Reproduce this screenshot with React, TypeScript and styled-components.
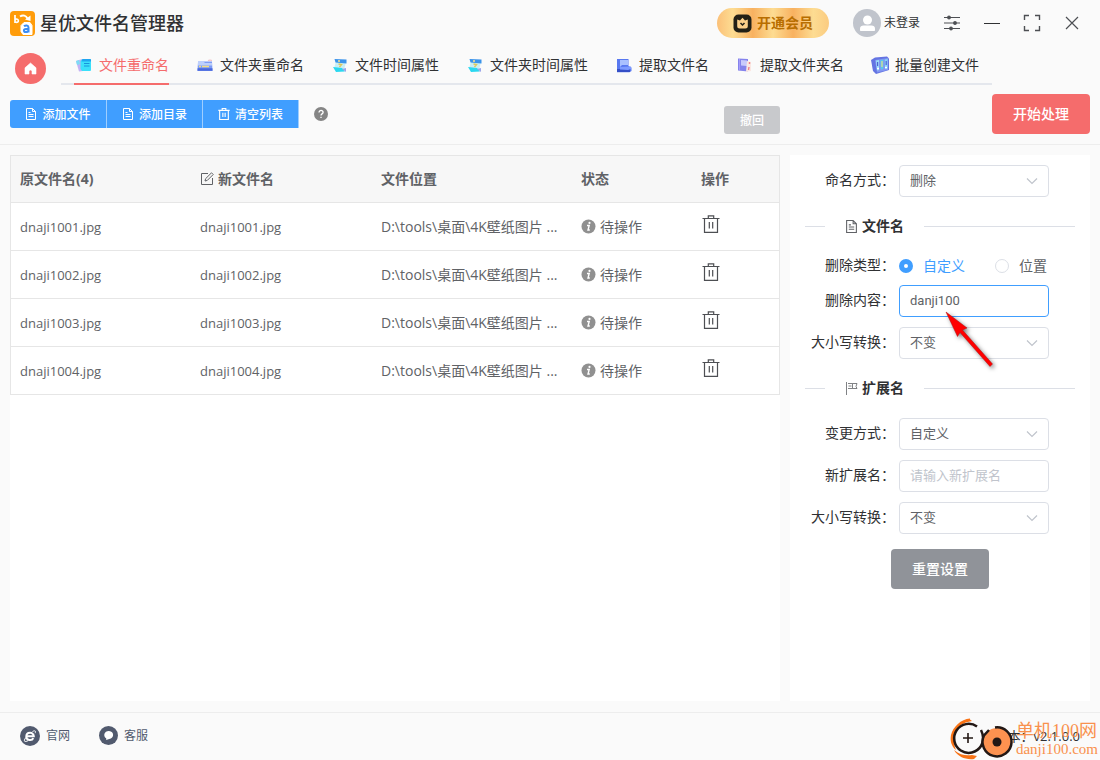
import React, { ReactNode } from "react";
import styled, { createGlobalStyle, css } from "styled-components";

const GlobalStyle = createGlobalStyle`
  *, *::before, *::after { box-sizing: border-box; }
  body {
    margin: 0;
    background: #fafafa;
    color: #303133;
    font-family: "Open Sans", "Noto Sans CJK SC", sans-serif;
    font-size: 14px;
    line-height: 20px;
  }
  button, input, select { font-family: inherit; margin: 0; }
  svg { display: block; flex: none; }
`;

/* ---------- layout ---------- */

const Window = styled.div`
  display: flex;
  flex-direction: column;
  min-height: 100vh;
`;

const TitleBar = styled.header`
  display: flex;
  align-items: center;
  height: 46px;
  padding: 0 18px 0 10px;
`;

const AppTitle = styled.h1`
  flex: 1;
  margin: 0 0 0 5px;
  font-size: 18px;
  line-height: 24px;
  font-weight: 500;
`;

const VipButton = styled.button`
  display: flex;
  align-items: center;
  justify-content: center;
  gap: 5px;
  width: 112px;
  height: 30px;
  padding: 0;
  border: 0;
  border-radius: 15px;
  background: linear-gradient(90deg, #fbc078 0%, #fddc92 14%, #f8b160 32%, #fddc92 50%, #f8b160 68%, #fddc92 86%, #fbcb80 100%);
  color: #b86e00;
  font-size: 14px;
  font-weight: 700;
  line-height: 20px;
`;

const UserButton = styled.button`
  display: flex;
  align-items: center;
  gap: 3px;
  margin: 0 22px 0 24px;
  padding: 0;
  border: 0;
  background: none;
  color: #303133;
  font-size: 12px;
  line-height: 16px;
`;

const WindowControls = styled.div`
  display: flex;
  gap: 20px;
`;

const IconButton = styled.button`
  display: flex;
  align-items: center;
  justify-content: center;
  width: 20px;
  height: 20px;
  padding: 0;
  border: 0;
  background: none;
  color: #4d4f53;
`;

const NavRow = styled.nav`
  display: flex;
  align-items: center;
  height: 39px;
  padding-left: 15px;
`;

const HomeButton = styled.button`
  display: flex;
  align-items: center;
  justify-content: center;
  width: 31px;
  height: 31px;
  margin: 6px 15px 0 0;
  padding: 0;
  border: 0;
  border-radius: 50%;
  background: #f56c6c;
`;

const TabList = styled.ul`
  display: flex;
  gap: 26px;
  height: 39px;
  margin: 0;
  padding: 0 13px;
  list-style: none;
  box-shadow: inset 0 -2px #e4e7ed;
`;

const Tab = styled.a<{ $active?: boolean }>`
  display: flex;
  align-items: center;
  gap: 5px;
  height: 39px;
  border-bottom: 2px solid ${(p) => (p.$active ? "#f56c6c" : "transparent")};
  color: ${(p) => (p.$active ? "#f56c6c" : "#303133")};
  text-decoration: none;
  white-space: nowrap;
`;

const Toolbar = styled.div`
  display: flex;
  align-items: center;
  height: 60px;
  padding: 0 10px 2px;
  border-bottom: 1px solid #ededed;
`;

const ButtonGroup = styled.div`
  display: flex;
  overflow: hidden;
  border-radius: 3px 0 0 3px;
`;

const buttonReset = css`
  display: flex;
  align-items: center;
  justify-content: center;
  padding: 0;
  border: 0;
  color: #fff;
  white-space: nowrap;
`;

const GroupButton = styled.button`
  ${buttonReset}
  gap: 5px;
  width: 96px;
  height: 28px;
  border-right: 1px solid #9fceff;
  background: #409eff;
  font-size: 12px;
  font-weight: 500;

  &:first-child { width: 97px; }
`;

const HelpButton = styled(IconButton)`
  margin-left: 12px;
`;

const UndoButton = styled.button`
  ${buttonReset}
  width: 56px;
  height: 28px;
  margin: 12px 212px 0 auto;
  border-radius: 3px;
  background: #c8c9cc;
  font-size: 12px;
  font-weight: 500;
`;

const LargeButton = styled.button<{ $tone: "danger" | "info" }>`
  ${buttonReset}
  width: 98px;
  height: 40px;
  padding-bottom: 2px;
  border-radius: 4px;
  background: ${(p) => (p.$tone === "danger" ? "#f56c6c" : "#909399")};
  font-size: 14px;
  font-weight: 500;
`;

const Content = styled.main`
  display: flex;
  flex: 1;
  gap: 10px;
  padding: 10px 10px 11px;
`;

const FilePanel = styled.section`
  flex: 1;
  min-width: 0;
  background: #fff;
`;

const FileTable = styled.table`
  width: 100%;
  table-layout: fixed;
  border: 1px solid #e6e6e6;
  border-bottom: 0;
  border-spacing: 0;
  color: #606266;
`;

const Column = styled.col<{ $width?: number }>`
  width: ${(p) => (p.$width ? `${p.$width}px` : "auto")};
`;

const cell = css`
  height: 48px;
  padding: 0 9px;
  border-bottom: 1px solid #e6e6e6;
  text-align: left;
  white-space: nowrap;
`;

const HeadCell = styled.th`
  ${cell}
  height: 47px;
  background: #f7f7f7;
  font-weight: 700;
`;

const Cell = styled.td<{ $latin?: boolean; $action?: boolean }>`
  ${cell}
  padding-bottom: ${(p) => (p.$action ? 5 : 0)}px;
  font-size: ${(p) => (p.$latin ? 13 : 14)}px;
`;

const Inline = styled.span`
  display: flex;
  align-items: center;
  gap: 4px;
`;

/* ---------- settings form ---------- */

const SettingsPanel = styled.form`
  display: flex;
  flex: none;
  flex-direction: column;
  width: 300px;
  padding: 10px 15px;
  background: #fff;
`;

const FormRow = styled.div<{ $compact?: boolean }>`
  position: relative;
  display: flex;
  align-items: center;
  gap: 4px;
  height: ${(p) => (p.$compact ? 19 : 32)}px;
  margin-bottom: 10px;
`;

const Label = styled.label`
  width: 90px;
  padding-bottom: 2px;
  text-align: right;
  white-space: nowrap;
`;

const Field = styled.div`
  position: relative;
  width: 150px;
`;

const control = css`
  display: block;
  width: 100%;
  height: 32px;
  padding: 0 10px 2px;
  border: 1px solid #dcdfe6;
  border-radius: 4px;
  outline: 0;
  background: #fff;
  color: #606266;
  font-size: 13px;
`;

const Select = styled.select`
  ${control}
  appearance: none;
`;

const TextInput = styled.input<{ $focused?: boolean }>`
  ${control}
  font-family: Roboto, "Noto Sans CJK SC", sans-serif;
  border-color: ${(p) => (p.$focused ? "#409eff" : "#dcdfe6")};
  &::placeholder { color: #c0c4cc; opacity: 1; }
`;

const Chevron = styled.svg`
  position: absolute;
  top: 10px;
  right: 11px;
  pointer-events: none;
`;

const SectionTitle = styled.h2`
  display: flex;
  align-items: center;
  gap: 4px;
  height: 20px;
  margin: 9px 0 20px;
  font-size: 14px;
  font-weight: 700;
  line-height: 20px;

  svg { color: #606266; }
  &::before, &::after {
    content: "";
    height: 1px;
    background: #dcdfe6;
  }
  &::before { width: 20px; margin-right: 16px; }
  &::after { flex: 1; margin-left: 16px; }
`;

const RadioLabel = styled.label<{ $checked?: boolean }>`
  display: flex;
  align-items: center;
  gap: 10px;
  margin-right: 26px;
  color: ${(p) => (p.$checked ? "#409eff" : "#606266")};
`;

const Radio = styled.input`
  appearance: none;
  width: 14px;
  height: 14px;
  border: 1px solid #dcdfe6;
  border-radius: 50%;
  background: #fff;
  &:checked { border: 5px solid #409eff; }
`;

const Pointer = styled.svg`
  position: absolute;
  top: 24px;
  left: 136px;
  z-index: 1;
  pointer-events: none;
  filter: drop-shadow(2px 2px 2px rgba(0, 0, 0, 0.5));
`;

const ResetRow = styled.div`
  display: flex;
  justify-content: center;
  margin-top: 5px;
`;

/* ---------- footer ---------- */

const Footer = styled.footer`
  position: relative;
  display: flex;
  align-items: center;
  gap: 29px;
  height: 48px;
  padding: 0 20px 2px;
  border-top: 1px solid #ededed;
`;

const FooterLink = styled.a`
  display: flex;
  align-items: center;
  gap: 6px;
  color: #515a6e;
  font-size: 12px;
  line-height: 16px;
  text-decoration: none;
`;

const Version = styled.span`
  margin-left: auto;
  font-size: 13px;
`;

const Watermark = styled.div`
  position: absolute;
  top: 5px;
  right: 2px;
  display: flex;
  align-items: center;
  gap: 2px;
`;

const WatermarkText = styled.div`
  color: #f9914d;
  font-family: "Liberation Serif", "Noto Sans CJK SC", serif;
  font-size: 15px;
  line-height: 16px;
`;

const WatermarkName = styled.div`
  font-size: 18px;
  line-height: 20px;
  white-space: nowrap;
`;

/* ---------- icons ---------- */

const LogoIcon = () => (
  <svg width="25" height="25" viewBox="0 0 25 25">
    <rect width="25" height="25" rx="4" fill="#ff9c0a" />
    <path d="M5 4v8M5 9.200a1.700 1.700 0 1 1 0 1" stroke="#fff" strokeWidth="1.700" fill="none" />
    <path d="M10 5.500c3-2 6-1 7.500 2" stroke="#fff" strokeWidth="2" fill="none" />
    <path d="M20.500 4.500V10l-5.500-1.500z" fill="#fff" />
    <path d="M14 11.500h6l2 3v9h-9l-2-3v-6z" fill="#fff" stroke="#fff" strokeLinejoin="round" />
    <path d="M14 15.300c1.500-1.300 4.500-1.300 4.500 1.200v5M18.500 18h-2.600c-2.700 0-2.500 3.100-.2 3.100 1.500 0 2.800-.8 2.800-2.100" stroke="#3b8df5" strokeWidth="2" fill="none" />
  </svg>
);

const VipIcon = () => (
  <svg width="19" height="19" viewBox="0 0 19 19">
    <rect x="0.500" y="0.500" width="18" height="18" rx="5" fill="#222016" />
    <path d="M4.200 5.500 7 6.500l2.500-2.700L12 6.500l2.800-1v6.500a2.500 2.500 0 0 1-2.500 2.500H6.700a2.500 2.500 0 0 1-2.500-2.500z" fill="#fbd08a" />
    <path d="m7.500 9 2 2 2-2" stroke="#222016" strokeWidth="1.500" fill="none" />
  </svg>
);

const AvatarIcon = () => (
  <svg width="28" height="28" viewBox="0 0 28 28">
    <circle cx="14" cy="14" r="14" fill="#c0c4cc" />
    <circle cx="14.500" cy="11" r="4.500" fill="#fff" />
    <path d="M7 21v-1.500c0-2 1.500-3 3.500-3h8c2 0 3.500 1 3.500 3V21c0 .6-.4 1-1 1H8c-.6 0-1-.4-1-1z" fill="#fff" />
  </svg>
);

const SlidersIcon = () => (
  <svg width="18" height="18" viewBox="0 0 18 18" stroke="currentColor" strokeWidth="1.200" fill="currentColor">
    <path d="M1 3.500h16M1 9h16M1 14.500h16" />
    <circle cx="6" cy="3.500" r="1.300" /><circle cx="12" cy="9" r="1.300" /><circle cx="8" cy="14.500" r="1.300" />
  </svg>
);

const MinimizeIcon = () => (
  <svg width="18" height="18" viewBox="0 0 18 18"><path d="M1 9.500h16" stroke="#303133" /></svg>
);

const FullscreenIcon = () => (
  <svg width="18" height="18" viewBox="0 0 18 18" stroke="currentColor" strokeWidth="1.400" fill="none">
    <path d="M1.500 6V1.500H6M12 1.500h4.500V6M16.500 12v4.500H12M6 16.500H1.500V12" />
  </svg>
);

const CloseIcon = () => (
  <svg width="18" height="18" viewBox="0 0 18 18" stroke="currentColor" strokeWidth="1.200">
    <path d="m3 3 12 12M15 3 3 15" />
  </svg>
);

const HomeIcon = () => (
  <svg width="13" height="13" viewBox="0 0 13 13" fill="#fff">
    <path d="M6.500 1 12 5.800V12H8V9.500a1.500 1.500 0 0 0-3 0V12H1V5.800z" stroke="#fff" strokeLinejoin="round" strokeWidth=".6" />
  </svg>
);

const DocumentIcon = ({ size = 12 }: { size?: number }) => (
  <svg width={size} height={size} viewBox="0 0 12 12" stroke="currentColor" fill="none">
    <path d="M1.500.5h6l3 3v8h-9zM7.500.5v3h3M3.500 6.500h5M3.500 8.500h5M3.500 4.500h2" />
  </svg>
);

const BinIcon = ({ size }: { size: number }) => (
  <svg width={size} height={size} viewBox="0 0 18 18" stroke="currentColor" strokeWidth={size > 14 ? 1.2 : 1.7} fill="none">
    <path d="M.5 3.500h17M6.300 3V.8h5.400V3M2.500 3.500v13.800h13V3.500M7.300 7v6.500M10.700 7v6.500" />
  </svg>
);

const HelpIcon = () => (
  <svg width="14" height="14" viewBox="0 0 14 14">
    <circle cx="7" cy="7" r="7" fill="#858585" />
    <path d="M5 5.500C5 2.700 9.200 2.900 9.100 5.400 9 6.900 7 6.900 7 8.500M7 9.800v1.300" stroke="#fff" strokeWidth="1.300" fill="none" />
  </svg>
);

const EditIcon = () => (
  <svg width="14" height="14" viewBox="0 0 14 14" stroke="currentColor" strokeWidth="1" fill="none">
    <path d="M8 1.500H1.500v11h11V6M5 9l.6-2.300L11.500.8l1.700 1.700-5.900 5.900z" />
  </svg>
);

const InfoIcon = () => (
  <svg width="15" height="15" viewBox="0 0 15 15">
    <circle cx="7.500" cy="7.500" r="7" fill="#909090" />
    <circle cx="8.500" cy="3.900" r="1.100" fill="#fff" />
    <path d="M6 6.500h2.200L7 11h1.800" stroke="#fff" strokeWidth="1.400" fill="none" />
  </svg>
);

const FlagIcon = () => (
  <svg width="13" height="13" viewBox="0 0 13 13" stroke="currentColor" fill="none">
    <path d="M1.500 0v13M3 1.500h4.500v5H3M7.500 1.500h4.500l-1 3 1 2H7.500M3.500 4h3" strokeWidth=".8" />
  </svg>
);

const BrowserIcon = () => (
  <svg width="20" height="20" viewBox="0 0 20 20">
    <circle cx="10" cy="10" r="10" fill="#515a6e" />
    <path d="M6.500 10.300h7.300c0-4.700-7.500-4.700-7.500.2 0 4.200 5.700 4.500 7 1.600" stroke="#fff" strokeWidth="2" fill="none" />
    <path d="M12.500 5.500c3-1.500 3.500-.2 2.600 1.700M5.800 11.500c-3 4.500-.7 4.600 2.200 3.200" stroke="#fff" strokeWidth="1" fill="none" />
  </svg>
);

const ChatIcon = () => (
  <svg width="19" height="19" viewBox="0 0 19 19">
    <circle cx="9.500" cy="9.500" r="9.500" fill="#515a6e" />
    <path d="M10 5c5.500.2 5.500 7.600.2 7.900L7.200 14v-1.700C3.700 10.200 5.200 4.900 10 5z" fill="#fff" />
  </svg>
);

const TabIconFrame = ({ children }: { children: ReactNode }) => (
  <svg width="20" height="20" viewBox="0 0 20 20">{children}</svg>
);

const RenameFileIcon = () => (
  <TabIconFrame>
    <path d="m2 6 6-2 1 12-4 .5z" fill="#c3b2f5" />
    <path d="m2 6 3-1 1 4-3 1z" fill="#7ddcf5" />
    <path d="M8.500 4H16a1 1 0 0 1 1 1v10a1 1 0 0 1-1 1H8l-1.500-2V6z" fill="#3be0fa" />
    <path d="M8.500 4H16a1 1 0 0 1 1 1v1.500H7.500z" fill="#1fa5f0" />
    <path d="M10 8.500h5.500M10 11h5.500" stroke="#1793dc" strokeWidth="1.200" />
  </TabIconFrame>
);

const RenameFolderIcon = () => (
  <TabIconFrame>
    <path d="M3 6.500h14l.5 9.500h-15z" fill="#7d9cf5" />
    <path d="M3 6h5l2 2h7v2.500H3z" fill="#bdcffc" />
    <path d="M4 11.500h2M7 11.500h7" stroke="#f3dc84" strokeWidth="1.400" />
    <path d="M2.500 14.500h15" stroke="#4b68dc" strokeWidth="2.500" />
    <path d="m13 5.500 2-.5 2 .5" stroke="#f2bcc0" strokeWidth="1.200" fill="none" />
  </TabIconFrame>
);

const TimeIcon = () => (
  <TabIconFrame>
    <path d="m6 6 10 1-2 8-10-1z" fill="#c9eff5" />
    <path d="m4.500 4 12 .5v4l-11-1z" fill="#3b93ea" />
    <path d="m3 12 9 1 3 3.500-9 .5z" fill="#2bd8f0" />
    <path d="m8.500 9 3 .5-2 2.500" stroke="#dcc860" strokeWidth="1.500" fill="none" />
    <path d="m12 14 4-1v4z" fill="#9aa6ea" />
    <circle cx="9" cy="6" r="1" fill="#ffe28a" />
  </TabIconFrame>
);

const ExtractFileIcon = () => (
  <TabIconFrame>
    <path d="M3 4h11.500v7l3 1.500V16l-2 1.200H3z" fill="#5878f0" />
    <path d="M6 5h8v5H8l-2 2z" fill="#a9c0ff" />
    <path d="M3 14h13v3H3z" fill="#354fc7" />
    <path d="m6 12 11-.5v2.500l-3 1-8-.5z" fill="#7d9aff" />
  </TabIconFrame>
);

const ExtractFolderIcon = () => (
  <TabIconFrame>
    <path d="M3 3.500 13 4v12.500L3 15.500z" fill="#8583ec" />
    <path d="m6 5 6 .5v5.500L6 10.500z" fill="#c9cafb" />
    <path d="m12 6 4 1v9l-5 1z" fill="#fbe8e3" />
    <path d="M14.500 7v2M14 12l-.5 3" stroke="#f0808a" strokeWidth="1.400" />
    <path d="M4.500 4v11" stroke="#a69df9" />
  </TabIconFrame>
);

const BatchIcon = () => (
  <TabIconFrame>
    <path d="m1 5 4-2.500 12-1 2 2V15l-13 4-3-3z" fill="#6474e2" />
    <path d="m5 5 13-2v12L7 17.500z" fill="#8296f2" />
    <path d="m6 5.500 3-.5v10l-2 .5z" fill="#9adcf7" />
    <path d="m10.300 5 3-.5v9.500l-2.500.5z" fill="#58c9ec" />
    <path d="M14.800 4.500 17.500 4v9.500l-2.500.5z" fill="#85d6f7" />
    <path d="M12 6v6" stroke="#e6df8a" strokeWidth="1.200" />
    <path d="M7.600 7v4M16.200 6v4" stroke="#5265d1" strokeWidth="1.200" />
    <path d="M7 13.500h2M15 12.500h2" stroke="#fff" strokeWidth="1.500" />
  </TabIconFrame>
);

const WatermarkLogo = () => (
  <svg width="64" height="42" viewBox="0 0 64 42" fill="none">
    <path d="M20 1.500 22 3c-6 1-11 3-14 7-5 7-5 15-2 22C1 28 0 22 1 17 3 9 11 1 20 .5z" fill="#f97316" />
    <path d="M4 32c6 5 12 6 18 5l5 1-3 3C16 42 8 39 4 32z" fill="#f97316" />
    <path d="M27 8.500A14.500 14.500 0 1 0 31 28C34 23 34 18 31 12" stroke="#231815" strokeWidth="2.500" />
    <path d="M18 15v10M13 20h10" stroke="#231815" strokeWidth="1.600" />
    <circle cx="47" cy="24" r="14" fill="#fd9250" />
    <path d="M45 9.500A14.500 14.500 0 1 1 34 17.500L39 12" stroke="#231815" strokeWidth="2.500" />
    <circle cx="47" cy="24" r="4.500" fill="#231815" />
  </svg>
);

/* ---------- data ---------- */

const tabs = [
  { label: "文件重命名", Icon: RenameFileIcon },
  { label: "文件夹重命名", Icon: RenameFolderIcon },
  { label: "文件时间属性", Icon: TimeIcon },
  { label: "文件夹时间属性", Icon: TimeIcon },
  { label: "提取文件名", Icon: ExtractFileIcon },
  { label: "提取文件夹名", Icon: ExtractFolderIcon },
  { label: "批量创建文件", Icon: BatchIcon },
];

const files = ["dnaji1001.jpg", "dnaji1002.jpg", "dnaji1003.jpg", "dnaji1004.jpg"];

function SelectRow({ id, label, options }: { id: string; label: string; options: string[] }) {
  return (
    <FormRow>
      <Label htmlFor={id}>{label}：</Label>
      <Field>
        <Select id={id}>
          {options.map((o) => <option key={o}>{o}</option>)}
        </Select>
        <Chevron width="12" height="12" viewBox="0 0 12 12" fill="none" stroke="#c0c4cc" strokeWidth="1.200">
          <path d="m1 3.500 5 5 5-5" />
        </Chevron>
      </Field>
    </FormRow>
  );
}

export default function App() {
  return (
    <Window>
      <GlobalStyle />
      <TitleBar>
        <LogoIcon />
        <AppTitle>星优文件名管理器</AppTitle>
        <VipButton><VipIcon />开通会员</VipButton>
        <UserButton><AvatarIcon />未登录</UserButton>
        <WindowControls>
          <IconButton aria-label="设置"><SlidersIcon /></IconButton>
          <IconButton aria-label="最小化"><MinimizeIcon /></IconButton>
          <IconButton aria-label="全屏"><FullscreenIcon /></IconButton>
          <IconButton aria-label="关闭"><CloseIcon /></IconButton>
        </WindowControls>
      </TitleBar>

      <NavRow>
        <HomeButton aria-label="首页"><HomeIcon /></HomeButton>
        <TabList>
          {tabs.map(({ label, Icon }, i) => (
            <li key={label}><Tab href="#" $active={i === 0}><Icon />{label}</Tab></li>
          ))}
        </TabList>
      </NavRow>

      <Toolbar>
        <ButtonGroup>
          <GroupButton><DocumentIcon />添加文件</GroupButton>
          <GroupButton><DocumentIcon />添加目录</GroupButton>
          <GroupButton><BinIcon size={12} />清空列表</GroupButton>
        </ButtonGroup>
        <HelpButton aria-label="帮助"><HelpIcon /></HelpButton>
        <UndoButton>撤回</UndoButton>
        <LargeButton $tone="danger">开始处理</LargeButton>
      </Toolbar>

      <Content>
        <FilePanel>
          <FileTable>
            <colgroup>
              <Column $width={180} />
              <Column $width={181} />
              <Column />
              <Column $width={120} />
              <Column $width={87} />
            </colgroup>
            <thead>
              <tr>
                <HeadCell>原文件名(4)</HeadCell>
                <HeadCell><Inline><EditIcon />新文件名</Inline></HeadCell>
                <HeadCell>文件位置</HeadCell>
                <HeadCell>状态</HeadCell>
                <HeadCell>操作</HeadCell>
              </tr>
            </thead>
            <tbody>
              {files.map((name) => (
                <tr key={name}>
                  <Cell $latin>{name}</Cell>
                  <Cell $latin>{name}</Cell>
                  <Cell>{"D:\\tools\\桌面\\4K壁纸图片 ..."}</Cell>
                  <Cell><Inline><InfoIcon />待操作</Inline></Cell>
                  <Cell $action><IconButton aria-label={`删除 ${name}`}><BinIcon size={18} /></IconButton></Cell>
                </tr>
              ))}
            </tbody>
          </FileTable>
        </FilePanel>

        <SettingsPanel>
          <SelectRow id="mode" label="命名方式" options={["删除"]} />
          <SectionTitle><DocumentIcon size={13} />文件名</SectionTitle>
          <FormRow $compact role="radiogroup" aria-labelledby="kind">
            <Label as="span" id="kind">删除类型：</Label>
            <RadioLabel $checked><Radio type="radio" name="kind" defaultChecked />自定义</RadioLabel>
            <RadioLabel><Radio type="radio" name="kind" />位置</RadioLabel>
          </FormRow>
          <FormRow>
            <Label htmlFor="remove">删除内容：</Label>
            <Field><TextInput id="remove" $focused defaultValue="danji100" /></Field>
            <Pointer width="56" height="64" viewBox="0 0 56 64">
              <path d="m5 3 21 16-4.500 2 30 34-2.500 2.500-30-34-2.500 4z" fill="#f00" stroke="#b01010" strokeWidth=".5" />
            </Pointer>
          </FormRow>
          <SelectRow id="name-case" label="大小写转换" options={["不变"]} />
          <SectionTitle><FlagIcon />扩展名</SectionTitle>
          <SelectRow id="ext-mode" label="变更方式" options={["自定义"]} />
          <FormRow>
            <Label htmlFor="ext">新扩展名：</Label>
            <Field><TextInput id="ext" placeholder="请输入新扩展名" /></Field>
          </FormRow>
          <SelectRow id="ext-case" label="大小写转换" options={["不变"]} />
          <ResetRow><LargeButton type="reset" $tone="info">重置设置</LargeButton></ResetRow>
        </SettingsPanel>
      </Content>

      <Footer>
        <FooterLink href="#"><BrowserIcon />官网</FooterLink>
        <FooterLink href="#"><ChatIcon />客服</FooterLink>
        <Version>版本：v2.1.0.0</Version>
        <Watermark>
          <WatermarkLogo />
          <WatermarkText>
            <WatermarkName>单机100网</WatermarkName>
            danji100.com
          </WatermarkText>
        </Watermark>
      </Footer>
    </Window>
  );
}
